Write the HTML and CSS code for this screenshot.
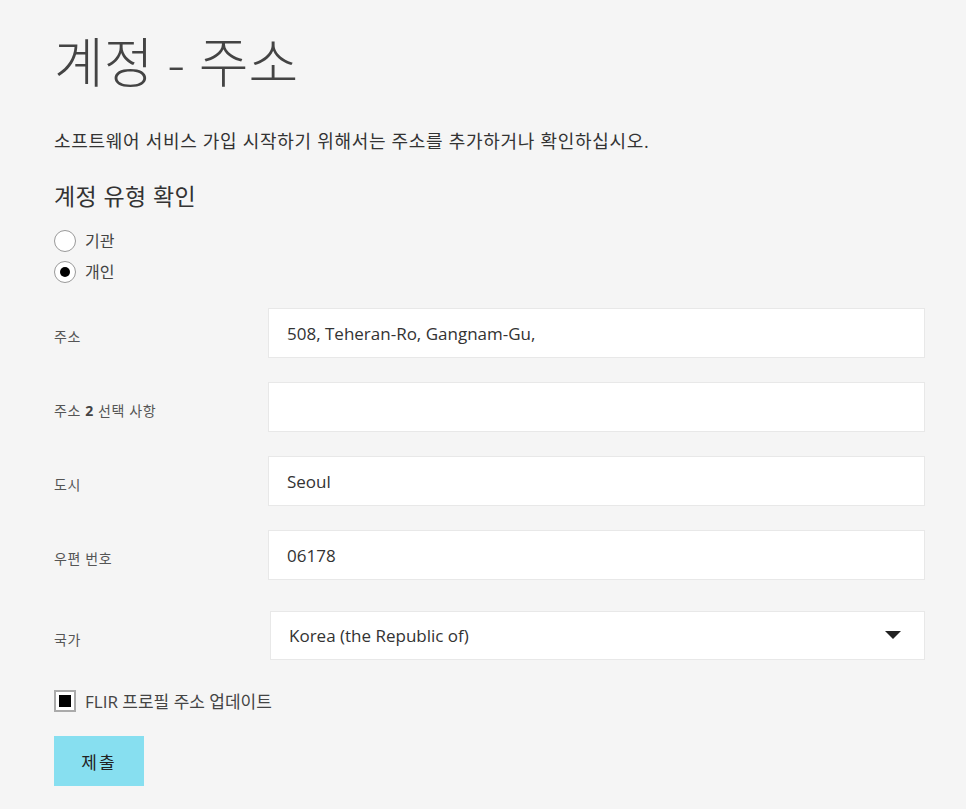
FILE: index.html
```html
<!DOCTYPE html>
<html lang="ko">
<head>
    <meta charset="UTF-8">
    <meta name="viewport" content="width=device-width, initial-scale=1.0">
    <title>계정 - 주소</title>
    <link rel="stylesheet" href="styles.css">
</head>
<body>
    <div class="page">
        <h1 class="title">계정 - 주소</h1>
        <p class="intro">소프트웨어 서비스 가입 시작하기 위해서는 주소를 추가하거나 확인하십시오.</p>

        <form class="address-form" onsubmit="return false">
            <h2 class="section-title">계정 유형 확인</h2>
            <div class="account-type">
                <label class="radio-row">
                    <input type="radio" name="accountType" value="org">
                    <span>기관</span>
                </label>
                <label class="radio-row">
                    <input type="radio" name="accountType" value="personal" checked>
                    <span>개인</span>
                </label>
            </div>

            <div class="fields">
                <div class="field">
                    <label for="address1">주소</label>
                    <input type="text" id="address1" value="508, Teheran-Ro, Gangnam-Gu,">
                </div>
                <div class="field">
                    <label for="address2">주소 <b>2</b> 선택 사항</label>
                    <input type="text" id="address2" value="">
                </div>
                <div class="field">
                    <label for="city">도시</label>
                    <input type="text" id="city" value="Seoul">
                </div>
                <div class="field">
                    <label for="zip">우편 번호</label>
                    <input type="text" id="zip" value="06178">
                </div>
                <div class="field field-select">
                    <label for="country">국가</label>
                    <div class="select-wrap">
                        <select id="country">
                            <option>Korea (the Republic of)</option>
                        </select>
                        <svg class="select-arrow" width="16" height="8" viewBox="0 0 16 8">
                            <path d="M0 0 H16 L8 8 Z" fill="#222"/>
                        </svg>
                    </div>
                </div>
            </div>

            <label class="check-row">
                <input type="checkbox" checked>
                <span>FLIR 프로필 주소 업데이트</span>
            </label>

            <button type="submit" class="submit-btn">제출</button>
        </form>
    </div>
</body>
</html>
```

FILE: styles.css
```css
* {
    margin: 0;
    padding: 0;
    box-sizing: border-box;
    font-family: 'Open Sans', 'Noto Sans CJK KR', sans-serif;
}

body {
    background-color: #f5f5f5;
    color: #333;
}

.page {
    width: 925px;
    padding: 22px 0 0 54px;
}

.title {
    font-size: 54px;
    font-weight: 300;
    color: #444;
    line-height: 80px;
}

.intro {
    margin-top: 27px;
    font-size: 18px;
    letter-spacing: 0.7px;
    line-height: 24px;
    color: #333;
}

.section-title {
    margin-top: 28px;
    font-size: 23px;
    letter-spacing: 0.4px;
    font-weight: 400;
    line-height: 30px;
    color: #333;
}

.account-type {
    margin-top: 19px;
    display: flex;
    flex-direction: column;
    gap: 9px;
}

.radio-row {
    display: flex;
    align-items: center;
    gap: 9px;
    font-size: 16px;
    line-height: 22px;
    color: #444;
}

.radio-row input {
    appearance: none;
    width: 22px;
    height: 22px;
    border: 1.5px solid #999;
    border-radius: 50%;
    background: #fff;
    display: grid;
    place-items: center;
}

.radio-row input:checked::after {
    content: "";
    width: 10px;
    height: 10px;
    border-radius: 50%;
    background: #000;
}

.fields {
    margin-top: 25px;
    display: flex;
    flex-direction: column;
    gap: 24px;
}

.field {
    display: grid;
    grid-template-columns: 214px 1fr;
    align-items: center;
}

.field label {
    padding-top: 6px;
    font-size: 14px;
    letter-spacing: 0.6px;
    color: #555;
}

.field label b {
    font-weight: 700;
    color: #444;
}

.field input {
    height: 50px;
    width: 100%;
    padding: 0 18px;
    border: 1px solid #e8e8e8;
    background: #fff;
    font-size: 17px;
    color: #333;
    outline: none;
}

.field-select {
    margin-top: 7px;
}

.select-wrap {
    position: relative;
    margin-left: 2px;
}

.select-wrap select {
    appearance: none;
    width: 100%;
    height: 49px;
    padding: 0 18px;
    border: 1px solid #e8e8e8;
    background: #fff;
    font-size: 17px;
    color: #333;
    outline: none;
}

.select-arrow {
    position: absolute;
    right: 24px;
    top: 20px;
    pointer-events: none;
}

.check-row {
    margin-top: 28px;
    display: flex;
    align-items: center;
    gap: 9px;
    font-size: 17px;
    color: #444;
}

.check-row input {
    appearance: none;
    width: 22px;
    height: 22px;
    border: 2px solid #aaa;
    background: #fff;
    display: grid;
    place-items: center;
}

.check-row input:checked::after {
    content: "";
    width: 12px;
    height: 12px;
    background: #000;
}

.submit-btn {
    margin-top: 23px;
    width: 90px;
    height: 50px;
    border: none;
    background-color: #87dff0;
    color: #222;
    font-size: 17px;
    letter-spacing: 2px;
    cursor: pointer;
}
```
